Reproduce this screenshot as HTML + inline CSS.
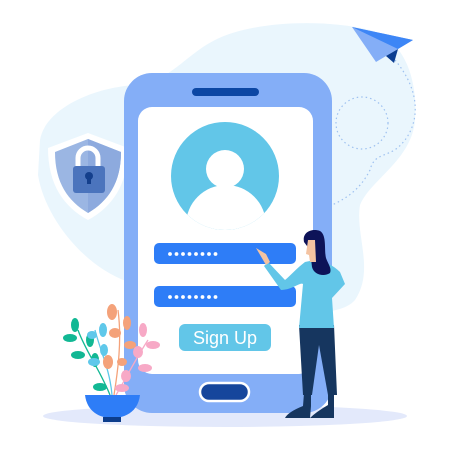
<!DOCTYPE html>
<html><head><style>body{margin:0;background:#fff}svg{display:block}</style></head>
<body>
<svg width="450" height="450" viewBox="0 0 450 450" xmlns="http://www.w3.org/2000/svg">
<path d="M40 140 C45 110 90 88 135 85 C170 82 185 55 215 40 C250 22 320 18 370 30 C405 40 418 80 415 120 C412 160 370 180 360 205 C355 235 375 270 355 300 C330 330 200 300 140 285 C90 275 45 220 38 175 Z" fill="#eaf6fd"/>
<ellipse cx="225" cy="416" rx="182" ry="11" fill="#e3e9fb"/>
<path d="M395 60 C420 90 420 120 405 140 C390 160 375 150 370 170 C360 190 345 200 325 208" fill="none" stroke="#9ec1f0" stroke-width="1.2" stroke-dasharray="1.5 3"/>
<circle cx="362" cy="123" r="26" fill="none" stroke="#9ec1f0" stroke-width="1.2" stroke-dasharray="1.5 3"/>
<polygon points="352,27 413,40 376,62" fill="#84aef7"/>
<polygon points="352,27 413,40 398,49" fill="#3d86f6"/>
<polygon points="386,56 398,49 394,63" fill="#0a3d91"/>
<path d="M88 133 L128 148 C128 185 112 207 88 220 C64 207 48 185 48 148 Z" fill="#fff"/>
<path d="M88 139 L121 152 C121 183 108 201 88 213 C68 201 55 183 55 152 Z" fill="#9bb6e3"/>
<path d="M88 139 L121 152 C121 183 108 201 88 213 Z" fill="#8daade"/>
<path d="M78 168 V158 A10 10 0 0 1 98 158 V168" fill="none" stroke="#fff" stroke-width="5"/>
<rect x="73" y="166" width="32" height="27" rx="3" fill="#4b74bd"/>
<circle cx="89" cy="176" r="4" fill="#143f8c"/><rect x="87" y="177" width="4" height="7" fill="#143f8c"/>
<rect x="124" y="73" width="208" height="340" rx="28" fill="#84aef7"/>
<rect x="138" y="107" width="175" height="267" rx="14" fill="#fff"/>
<rect x="192" y="88" width="67" height="8" rx="4" fill="#0c47a4"/>
<rect x="200" y="383" width="49" height="18" rx="9" fill="#16469c" stroke="#fff" stroke-width="2.5"/>
<clipPath id="c"><circle cx="225" cy="176" r="54"/></clipPath>
<circle cx="225" cy="176" r="54" fill="#62c6e8"/>
<g clip-path="url(#c)" fill="#fff"><circle cx="225" cy="169" r="19"/><ellipse cx="226" cy="225" rx="40" ry="40"/></g>
<rect x="154" y="243" width="142" height="21" rx="5" fill="#2e7df7"/>
<rect x="154" y="286" width="142" height="21" rx="5" fill="#2e7df7"/>
<g fill="#fff">
<circle cx="170" cy="254" r="1.9"/><circle cx="176.5" cy="254" r="1.9"/><circle cx="183" cy="254" r="1.9"/><circle cx="189.5" cy="254" r="1.9"/><circle cx="196" cy="254" r="1.9"/><circle cx="202.5" cy="254" r="1.9"/><circle cx="209" cy="254" r="1.9"/><circle cx="215.5" cy="254" r="1.9"/>
<circle cx="170" cy="297" r="1.9"/><circle cx="176.5" cy="297" r="1.9"/><circle cx="183" cy="297" r="1.9"/><circle cx="189.5" cy="297" r="1.9"/><circle cx="196" cy="297" r="1.9"/><circle cx="202.5" cy="297" r="1.9"/><circle cx="209" cy="297" r="1.9"/><circle cx="215.5" cy="297" r="1.9"/>
</g>
<rect x="179" y="324" width="92" height="27" rx="6" fill="#62c6e8"/>
<text x="225" y="344" text-anchor="middle" font-family="Liberation Sans,sans-serif" font-size="18" fill="#fff">Sign Up</text>
<!-- woman -->
<path d="M299 325 L334 325 L337 395 L328 395 L319 345 L312 395 L303 395 Z" fill="#16365f"/>
<path d="M304 393 L311 393 L311 406 L310 418 L285 418 Q288 412 303 406 Z" fill="#16365f"/>
<path d="M328 393 L334 393 L334 418 L310 418 Q316 412 328 405 Z" fill="#16365f"/>
<path d="M305 262 C297 268 290 276 285 280 L268 262 L264 266 L281 290 C292 290 300 282 303 284 L299 328 L334 328 L332 298 L345 284 L340 272 C332 264 320 258 305 262 Z" fill="#62c6e8"/>
<path d="M256 248 L266 254 L270 262 L266 265 Z" fill="#f4c3a1"/>
<path d="M304 242 C302 232 312 228 320 231 C327 235 324 250 326 258 C328 264 332 268 330 273 C324 277 314 275 312 267 L310 250 Z" fill="#0d1358"/>
<path d="M308 240 L315 240 L316 262 L310 262 L309 255 L306 254 Z" fill="#f4c3a1"/>
<!-- plant -->
<g fill="none" stroke-width="1.3">
<path d="M110 395 C100 370 85 350 78 330" stroke="#12b894"/>
<path d="M112 395 C110 370 100 350 95 330" stroke="#5fc8ea"/>
<path d="M114 395 C118 370 122 340 118 310" stroke="#f4a27a"/>
<path d="M116 395 C125 380 135 360 148 340" stroke="#f7a9c6"/>
</g>
<g fill="#12b894"><ellipse cx="75" cy="325" rx="4" ry="7"/><ellipse cx="70" cy="338" rx="7" ry="4"/><ellipse cx="90" cy="340" rx="4" ry="7"/><ellipse cx="78" cy="355" rx="7" ry="4"/><ellipse cx="95" cy="360" rx="4" ry="7"/><ellipse cx="100" cy="387" rx="7" ry="4"/></g>
<g fill="#5fc8ea"><ellipse cx="103" cy="330" rx="4" ry="7"/><ellipse cx="92" cy="335" rx="5" ry="4"/><ellipse cx="104" cy="350" rx="4" ry="6"/><ellipse cx="94" cy="362" rx="6" ry="4"/></g>
<g fill="#f4a27a"><ellipse cx="112" cy="312" rx="5" ry="8"/><ellipse cx="127" cy="323" rx="4" ry="7"/><ellipse cx="115" cy="333" rx="6" ry="5"/><ellipse cx="130" cy="345" rx="6" ry="4"/><ellipse cx="108" cy="362" rx="5" ry="7"/><ellipse cx="122" cy="362" rx="5" ry="4"/></g>
<g fill="#f7a9c6"><ellipse cx="143" cy="330" rx="4" ry="7"/><ellipse cx="153" cy="345" rx="7" ry="4"/><ellipse cx="138" cy="352" rx="5" ry="6"/><ellipse cx="145" cy="368" rx="7" ry="4"/><ellipse cx="126" cy="376" rx="5" ry="6"/><ellipse cx="122" cy="388" rx="7" ry="4"/></g>
<path d="M85 395 L140 395 C138 412 125 418 112 418 C100 418 87 412 85 395 Z" fill="#2e7df7"/>
<rect x="103" y="417" width="18" height="5" fill="#0c3d8c"/>
</svg>
</body></html>
